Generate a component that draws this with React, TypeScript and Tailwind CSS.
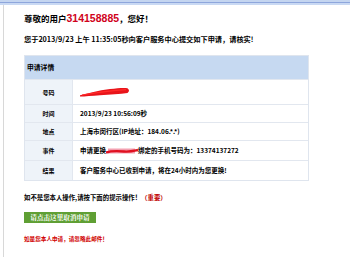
import React from "react";

const font = "font-['Noto_Sans_CJK_SC','Noto_Sans',sans-serif]";

function Scribble1() {
  return (
    <svg width="50" height="10" viewBox="0 0 50 10" className="block">
      <path d="M0 8.2 C8 6.5 18 3.5 30 2 C38 1 44 0.6 47.5 1.2 Q50.5 3.5 47.5 6 C40 7 30 7.6 20 8.2 C12 8.8 5 9.4 0 9.6 Z" fill="#e8141a" />
      <path d="M2 8 C14 6 28 3.8 46 2.6" stroke="#ff2a2a" strokeWidth="1.2" fill="none" />
    </svg>
  );
}

function Scribble2() {
  return (
    <svg width="32" height="8" viewBox="0 0 32 8" className="inline-block align-middle">
      <rect x="2" y="1.5" width="27" height="5" fill="#f3a0b0" />
      <path d="M0 5.5 C6 3.5 12 4 18 4.5 C24 5 28 3.8 32 3" stroke="#e01020" strokeWidth="2.4" fill="none" />
    </svg>
  );
}

export default function App() {
  const rows: { label: string; h: string; content: React.ReactNode }[] = [
    { label: "号码", h: "h-[25px]", content: <Scribble1 /> },
    { label: "时间", h: "h-[18px]", content: <span>2013/9/23 10:56:09秒</span> },
    { label: "地点", h: "h-[18px]", content: <span>上海市闵行区(IP地址：184.06.*.*)</span> },
    {
      label: "事件",
      h: "h-[20px]",
      content: (
        <span className="inline-flex items-center">
          申请更换
          <Scribble2 />
          绑定的手机号码为：13374137272
        </span>
      ),
    },
    { label: "结果", h: "h-[20px]", content: <span>客户服务中心已收到申请，将在24小时内为您更换!</span> },
  ];

  return (
    <div className={`w-[350px] h-[257px] bg-white overflow-hidden ${font} text-black`}>
      <div className="h-[5px] flex flex-col">
        <div className="h-[2px] bg-[#c4d5f0]" />
        <div className="h-[1px] bg-[#8ea6dc]" />
        <div className="h-[2px] bg-[#c9d9f3]" />
      </div>
      <div className="ml-[3px] h-[252px] border-l border-[#d8d8d8] pl-[20px] flex flex-col">
        <div className="mt-[7px] h-[12px] leading-[12px] text-[8.5px] font-bold whitespace-nowrap">
          尊敬的用户<span className="text-[10.5px] text-[#d0021b] font-['Liberation_Sans',sans-serif] font-bold">314158885</span>，您好！
        </div>
        <div className="mt-[10px] h-[10px] leading-[10px] text-[7.2px] font-bold whitespace-nowrap">
          您于2013/9/23 上午 11:35:05秒向客户服务中心提交如下申请，请核实!
        </div>
        <div className="mt-[11px] w-[285px] border border-[#dfe5ee] flex flex-col">
          <div className="h-[23px] bg-[#c6d9f1] flex items-center pl-[2px] text-[6.8px] font-bold">
            申请详情
          </div>
          {rows.map((r) => (
            <div key={r.label} className={`${r.h} flex border-t border-[#e2e7ef]`}>
              <div className="w-[48px] bg-[#eef3f9] border-r border-[#e2e7ef] flex items-center justify-center text-[6px] font-bold">
                {r.label}
              </div>
              <div className="flex-1 flex items-center pl-[7px] text-[6.5px] font-bold whitespace-nowrap">
                {r.content}
              </div>
            </div>
          ))}
        </div>
        <div className="mt-[12px] h-[10px] leading-[10px] text-[6.4px] font-bold whitespace-nowrap">
          如不是您本人操作,请按下面的提示操作！<span className="text-[#c00000]">（重要）</span>
        </div>
        <div className="mt-[9px] w-[72px] h-[11px] bg-[#5f9f34] text-white flex items-center justify-center text-[6.6px] font-bold font-['Noto_Serif_CJK_SC','Noto_Sans_CJK_SC',serif] whitespace-nowrap">
          请点击这里取消申请
        </div>
        <div className="mt-[12px] h-[8px] leading-[8px] text-[5.6px] font-bold text-[#d00000] whitespace-nowrap">
          如是您本人申请，请忽略此邮件！
        </div>
      </div>
    </div>
  );
}
